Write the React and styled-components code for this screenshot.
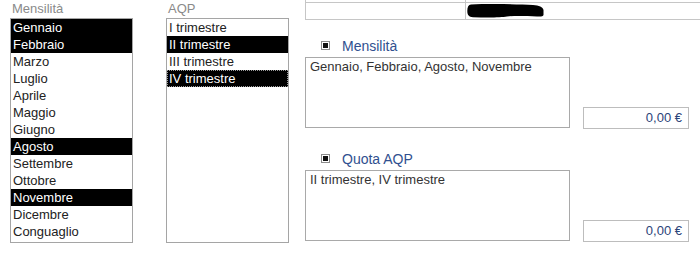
import styled, { createGlobalStyle, css } from 'styled-components'

const months = [
  { name: 'Gennaio', selected: true },
  { name: 'Febbraio', selected: true },
  { name: 'Marzo' },
  { name: 'Luglio' },
  { name: 'Aprile' },
  { name: 'Maggio' },
  { name: 'Giugno' },
  { name: 'Agosto', selected: true },
  { name: 'Settembre' },
  { name: 'Ottobre' },
  { name: 'Novembre', selected: true },
  { name: 'Dicembre' },
  { name: 'Conguaglio' }
]

const quarters = [
  { name: 'I trimestre' },
  { name: 'II trimestre', selected: true },
  { name: 'III trimestre' },
  { name: 'IV trimestre', selected: true, focused: true }
]

const sections = [
  { title: 'Mensilità', text: 'Gennaio, Febbraio, Agosto, Novembre', value: '0,00 €' },
  { title: 'Quota AQP', text: 'II trimestre, IV trimestre', value: '0,00 €' }
]

const App = () => {
  return (
    <>
      <GlobalStyle />
      <StyledPage>

        <StyledColumn>
          <StyledLabel>Mensilità</StyledLabel>
          <StyledList>
            {months.map((m) => (
              <StyledOption key={m.name} $selected={m.selected}>
                {m.name}
              </StyledOption>
            ))}
          </StyledList>
        </StyledColumn>

        <StyledColumn>
          <StyledLabel>AQP</StyledLabel>
          <StyledList>
            {quarters.map((q) => (
              <StyledOption key={q.name} $selected={q.selected} $focused={q.focused}>
                {q.name}
              </StyledOption>
            ))}
          </StyledList>
        </StyledColumn>

        <StyledPanel>
          <StyledTopTable>
            <StyledCell $cut />
            <StyledCell $cut $divider />
            <StyledCell />
            <StyledCell $divider>
              <StyledRedaction width='77' height='14' viewBox='0 0 77 14'>
                <path d='M4 0.5 C 20 -0.3 50 0 66 1 C 72 1.5 76 3 76.5 6 L 76.5 11 C 76 12.5 74 12.5 70 12.4 C 58 12 46 11.6 40 12.6 C 34 13.6 20 13.8 6 13.2 C 2 13 0.3 11 0.3 7 C 0.3 3 1.5 0.7 4 0.5 Z' fill='#000' />
              </StyledRedaction>
            </StyledCell>
          </StyledTopTable>

          {sections.map((s, i) => (
            <StyledSection key={s.title} $first={i === 0}>
              <StyledHeading>
                <StyledBullet />
                {s.title}
              </StyledHeading>
              <StyledRow>
                <StyledTextArea>{s.text}</StyledTextArea>
                <StyledValue>{s.value}</StyledValue>
              </StyledRow>
            </StyledSection>
          ))}
        </StyledPanel>

      </StyledPage>
    </>
  )
}

const GlobalStyle = createGlobalStyle`
  html, body {
    margin: 0;
    padding: 0;
    background: #fff;
  }

  body {
    font-family: 'Liberation Sans', Arial, sans-serif;
    font-size: 13px;
    color: #222;
  }
`

const StyledPage = styled.div`
  display: flex;
  align-items: flex-start;
  padding-left: 10px;
  width: 700px;
  height: 254px;
  box-sizing: border-box;
  overflow: hidden;
`

const StyledColumn = styled.div`
  width: 123px;
  margin-right: 33px;
  display: flex;
  flex-direction: column;

  &:nth-of-type(2) {
    margin-right: 16px;
  }
`

const StyledLabel = styled.div`
  color: #8a8a8a;
  line-height: 15px;
  padding: 1px 0 2px 2px;
`

const StyledList = styled.div`
  height: 225px;
  box-sizing: border-box;
  border: 1px solid #a5a5a5;
  background: #fff;
`

const StyledOption = styled.div`
  height: 17px;
  line-height: 17px;
  padding-left: 2px;
  white-space: nowrap;
  box-sizing: border-box;

  ${({ $selected }) => $selected && css`
    background: #000;
    color: #fff;
  `}

  ${({ $focused }) => $focused && css`
    outline: 1px dotted #9a9a9a;
    outline-offset: -1px;
  `}
`

const StyledPanel = styled.div`
  flex: 1;
  display: flex;
  flex-direction: column;
`

const StyledTopTable = styled.div`
  display: grid;
  grid-template-columns: 159px 1fr;
  grid-template-rows: 2px 17px;
  border-left: 1px solid #c6c6c6;
  border-bottom: 1px solid #c6c6c6;
`

const StyledCell = styled.div`
  border-top: 1px solid #c6c6c6;

  ${({ $cut }) => $cut && css`
    border-top: none;
  `}

  ${({ $divider }) => $divider && css`
    border-left: 1px solid #c6c6c6;
  `}
`

const StyledRedaction = styled.svg`
  display: block;
  margin: 1px 0 0 1px;
`

const StyledSection = styled.div`
  margin-top: ${({ $first }) => ($first ? '17px' : '22px')};
  display: flex;
  flex-direction: column;
`

const StyledHeading = styled.div`
  display: flex;
  align-items: center;
  font-size: 14px;
  line-height: 18px;
  color: #30508f;
  padding-left: 16px;
  margin-bottom: 2px;
`

const StyledBullet = styled.span`
  width: 5px;
  height: 5px;
  padding: 1px;
  border: 1px solid #8c8c8c;
  background: #111;
  background-clip: content-box;
  box-sizing: content-box;
  margin-right: 12px;
  margin-top: -1px;
`

const StyledRow = styled.div`
  display: flex;
  align-items: flex-end;
  column-gap: 13px;
`

const StyledTextArea = styled.div`
  width: 265px;
  height: 71px;
  box-sizing: border-box;
  border: 1px solid #a9a9a9;
  padding: 1px 4px;
  line-height: 15px;
  color: #333;
`

const StyledValue = styled.div`
  width: 106px;
  height: 22px;
  box-sizing: border-box;
  border: 1px solid #bdbdbd;
  margin-bottom: -1px;
  padding-right: 6px;
  line-height: 20px;
  text-align: right;
  color: #2c4479;
`

export default App
